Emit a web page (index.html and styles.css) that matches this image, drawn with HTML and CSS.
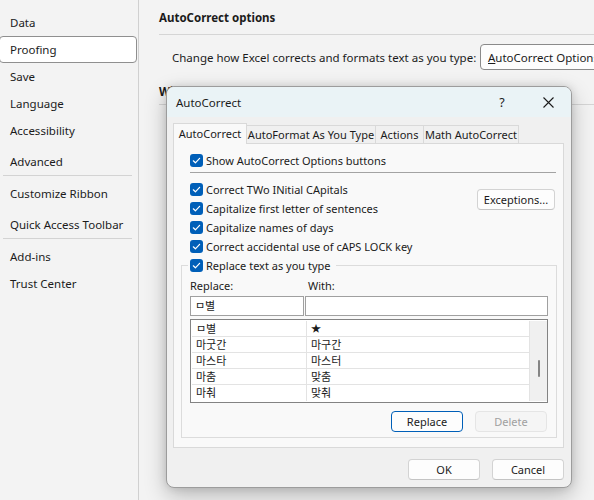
FILE: index.html
```html
<!DOCTYPE html>
<html lang="en">
<head>
<meta charset="utf-8">
<title>Excel Options - Proofing</title>
<link rel="stylesheet" href="styles.css">
</head>
<body>
<div class="app">
  <nav class="sidebar">
    <div class="nav-item">Data</div>
    <div class="nav-item selected">Proofing</div>
    <div class="nav-item">Save</div>
    <div class="nav-item">Language</div>
    <div class="nav-item">Accessibility</div>
    <div class="nav-item spaced">Advanced</div>
    <div class="nav-divider"></div>
    <div class="nav-item spaced">Customize Ribbon</div>
    <div class="nav-item spaced">Quick Access Toolbar</div>
    <div class="nav-divider"></div>
    <div class="nav-item spaced">Add-ins</div>
    <div class="nav-item">Trust Center</div>
  </nav>
  <main class="content">
    <h2 class="section-title">AutoCorrect options</h2>
    <div class="option-row">
      <span class="option-label">Change how Excel corrects and formats text as you type:</span>
      <button class="btn options-btn"><u>A</u>utoCorrect Options...</button>
    </div>
    <h2 class="section-title second">When correcting spelling in Microsoft Office programs</h2>
  </main>

  <div class="dialog">
    <div class="titlebar">
      <span class="dialog-title">AutoCorrect</span>
      <span class="tb-btn help">?</span>
      <span class="tb-btn close">
        <svg width="11" height="11" viewBox="0 0 11 11"><path d="M0.5 0.5 L10.5 10.5 M10.5 0.5 L0.5 10.5" stroke="#1b1b1b" stroke-width="1.1" fill="none"/></svg>
      </span>
    </div>
    <div class="dialog-body">
      <div class="tabs">
        <div class="tab active w1">AutoCorrect</div>
        <div class="tab w2">AutoFormat As You Type</div>
        <div class="tab w3">Actions</div>
        <div class="tab w4">Math AutoCorrect</div>
      </div>
      <div class="panel">
        <div class="check show-row"><span class="box"><svg width="13" height="13" viewBox="0 0 13 13"><path d="M3.3 6.8 L5.4 8.8 L9.6 4.3" stroke="#fff" stroke-width="1.2" fill="none" stroke-linecap="round" stroke-linejoin="round"/></svg></span>Show AutoCorrect Options buttons</div>
        <div class="sep"></div>
        <div class="checks-area">
          <div class="checks">
            <div class="check"><span class="box"><svg width="13" height="13" viewBox="0 0 13 13"><path d="M3.3 6.8 L5.4 8.8 L9.6 4.3" stroke="#fff" stroke-width="1.2" fill="none" stroke-linecap="round" stroke-linejoin="round"/></svg></span>Correct TWo INitial CApitals</div>
            <div class="check"><span class="box"><svg width="13" height="13" viewBox="0 0 13 13"><path d="M3.3 6.8 L5.4 8.8 L9.6 4.3" stroke="#fff" stroke-width="1.2" fill="none" stroke-linecap="round" stroke-linejoin="round"/></svg></span>Capitalize first letter of sentences</div>
            <div class="check"><span class="box"><svg width="13" height="13" viewBox="0 0 13 13"><path d="M3.3 6.8 L5.4 8.8 L9.6 4.3" stroke="#fff" stroke-width="1.2" fill="none" stroke-linecap="round" stroke-linejoin="round"/></svg></span>Capitalize names of days</div>
            <div class="check"><span class="box"><svg width="13" height="13" viewBox="0 0 13 13"><path d="M3.3 6.8 L5.4 8.8 L9.6 4.3" stroke="#fff" stroke-width="1.2" fill="none" stroke-linecap="round" stroke-linejoin="round"/></svg></span>Correct accidental use of cAPS LOCK key</div>
          </div>
          <button class="btn exceptions">Exceptions...</button>
        </div>
        <fieldset class="group">
          <legend class="legend"><span class="check"><span class="box"><svg width="13" height="13" viewBox="0 0 13 13"><path d="M3.3 6.8 L5.4 8.8 L9.6 4.3" stroke="#fff" stroke-width="1.2" fill="none" stroke-linecap="round" stroke-linejoin="round"/></svg></span>Replace text as you type</span></legend>
          <div class="field-labels">
            <span class="lbl-replace">Replace:</span>
            <span class="lbl-with">With:</span>
          </div>
          <div class="inputs">
            <div class="input in-replace">ㅁ별</div>
            <div class="input in-with"></div>
          </div>
          <div class="list">
            <div class="rows">
              <div class="row"><span class="cell c1">ㅁ별</span><span class="cell c2 star">★</span></div>
              <div class="row"><span class="cell c1">마굿간</span><span class="cell c2">마구간</span></div>
              <div class="row"><span class="cell c1">마스타</span><span class="cell c2">마스터</span></div>
              <div class="row"><span class="cell c1">마춤</span><span class="cell c2">맞춤</span></div>
              <div class="row last"><span class="cell c1">마춰</span><span class="cell c2">맞춰</span></div>
            </div>
            <div class="scrollbar"><div class="thumb"></div></div>
          </div>
          <div class="group-buttons">
            <button class="btn dbtn default">Replace</button>
            <button class="btn dbtn disabled">Delete</button>
          </div>
        </fieldset>
      </div>
      <div class="dialog-buttons">
        <button class="btn dbtn">OK</button>
        <button class="btn dbtn">Cancel</button>
      </div>
    </div>
  </div>
</div>
</body>
</html>
```
FILE: styles.css
```css
html, body {
  margin: 0;
  padding: 0;
}
body {
  width: 594px;
  height: 500px;
  overflow: hidden;
  background: #f3f3f3;
  font-family: "Noto Sans", "Noto Sans CJK KR", sans-serif;
  font-size: 11.5px;
  color: #1b1b1b;
}
.app {
  position: relative;
  display: flex;
  width: 594px;
  height: 500px;
  overflow: hidden;
}

/* Sidebar */
.sidebar {
  width: 138px;
  flex-shrink: 0;
  border-right: 1px solid #d0d0d0;
  padding-top: 9px;
}
.nav-item {
  height: 27px;
  line-height: 27px;
  padding-left: 10px;
  white-space: nowrap;
  box-sizing: border-box;
}
.nav-item.selected {
  background: #ffffff;
  border: 1px solid #8f8f8f;
  border-radius: 4px;
  margin-left: -1px;
  margin-right: 1px;
  padding-left: 10px;
  line-height: 25px;
}
.nav-item.spaced {
  margin-top: 4px;
}
.nav-divider {
  height: 1px;
  background: #d3d3d3;
  margin: 0 6px 0 3px;
}

/* Main content */
.content {
  flex: 1;
  min-width: 0;
  padding-left: 20px;
}
.section-title {
  margin: 0;
  font-size: 11.5px;
  font-weight: 700;
  height: 20px;
  line-height: 20px;
  padding: 8px 0 6px 0;
  border-bottom: 1px solid #d5d5d5;
  white-space: nowrap;
}
.section-title.second {
  padding: 12px 0 2px 0;
}
.option-row {
  display: flex;
  align-items: center;
  height: 26px;
  margin-top: 9px;
  padding-left: 13px;
  white-space: nowrap;
}
.option-label {
  width: 308px;
  flex-shrink: 0;
}
.btn {
  font-family: "Noto Sans", "Noto Sans CJK KR", sans-serif;
  font-size: inherit;
  color: #1b1b1b;
  background: #fdfdfd;
  border: 1px solid #d3d3d3;
  border-bottom-color: #c4c4c4;
  border-radius: 4px;
  box-sizing: border-box;
  padding: 0;
  margin: 0;
  white-space: nowrap;
}
.options-btn {
  flex-shrink: 0;
  height: 26px;
  padding: 0 7px;
  border-color: #8a8a8a;
}

/* Dialog */
.dialog {
  position: absolute;
  left: 166px;
  top: 86px;
  width: 406px;
  height: 402px;
  box-sizing: border-box;
  border: 1px solid #9c9c9c;
  border-radius: 8px;
  background: #f0f0f0;
  overflow: hidden;
  font-size: 11px;
  box-shadow: 0 8px 22px rgba(0, 0, 0, 0.24), 0 0 8px rgba(0, 0, 0, 0.12);
}
.titlebar {
  display: flex;
  align-items: center;
  height: 30px;
  background: #eaf3f6;
}
.dialog-title {
  flex: 1;
  padding-left: 9px;
  font-size: 11.5px;
}
.tb-btn {
  width: 46px;
  height: 30px;
  display: flex;
  align-items: center;
  justify-content: center;
}
.help {
  font-size: 12.5px;
}
.dialog-body {
  padding: 6px 7px 0 6px;
}

/* Tabs */
.tabs {
  display: flex;
  align-items: flex-end;
  height: 20px;
}
.tab {
  position: relative;
  height: 18px;
  line-height: 17px;
  box-sizing: border-box;
  border: 1px solid #d9d9d9;
  border-bottom: none;
  background: #f0f0f0;
  text-align: center;
  white-space: nowrap;
  margin-left: -1px;
}
.tab.active {
  height: 21px;
  line-height: 19px;
  margin-bottom: -1px;
  margin-left: 0;
  background: #f9f9f9;
  z-index: 1;
}
.w1 { width: 74px; }
.w2 { width: 130px; }
.w3 { width: 49px; }
.w4 { width: 96px; }

.panel {
  height: 305px;
  box-sizing: border-box;
  border: 1px solid #d9d9d9;
  background: #f9f9f9;
}
.check {
  display: flex;
  align-items: center;
  gap: 3px;
  height: 19px;
  white-space: nowrap;
}
.box {
  width: 13px;
  height: 13px;
  border-radius: 3px;
  background: #005fb8;
  flex-shrink: 0;
  display: flex;
}
.show-row {
  height: 18px;
  margin: 7px 0 0 16px;
}
.sep {
  height: 1px;
  background: #a3a3a3;
  margin: 3px 7px 0 16px;
}
.checks-area {
  display: flex;
  justify-content: space-between;
  align-items: flex-start;
  margin: 7px 8px 0 16px;
}
.exceptions {
  width: 78px;
  height: 21px;
  margin-top: 9px;
}

/* Group box */
.group {
  margin: 0 6px 0 7px;
  padding: 0 8px 5px 8px;
  border: 1px solid #dcdcdc;
  min-width: 0;
}
.legend {
  padding: 0 5px 0 2px;
  margin-left: -2px;
}
.field-labels {
  display: flex;
  height: 20px;
  line-height: 20px;
  margin-top: 1px;
}
.lbl-replace {
  width: 118px;
}
.inputs {
  display: flex;
  gap: 1px;
}
.input {
  height: 20px;
  line-height: 18px;
  box-sizing: border-box;
  border: 1px solid #a0a0a0;
  background: #ffffff;
  padding-left: 4px;
}
.in-replace {
  width: 114px;
}
.in-with {
  width: 243px;
}
.list {
  display: flex;
  margin-top: 3px;
  height: 84px;
  box-sizing: border-box;
  border: 1px solid #838383;
  background: #ffffff;
  padding: 1px 0 1px 1px;
}
.rows {
  flex: 1;
  border-right: 1px solid #e3e3e3;
}
.row {
  display: grid;
  grid-template-columns: 115px 1fr;
  height: 16px;
  box-sizing: border-box;
  border-bottom: 1px solid #e3e3e3;
}
.row.last {
  border-bottom: none;
}
.cell {
  padding-left: 4px;
  line-height: 15px;
  white-space: nowrap;
  overflow: hidden;
}
.c1 {
  border-right: 1px solid #e3e3e3;
}
.star {
  font-size: 10px;
}
.scrollbar {
  width: 17px;
  background: #f0f0f0;
  display: flex;
  flex-direction: column;
  align-items: center;
  padding-top: 39px;
  box-sizing: border-box;
}
.thumb {
  width: 2px;
  height: 17px;
  border-radius: 1px;
  background: #858585;
}
.group-buttons {
  display: flex;
  justify-content: flex-end;
  gap: 12px;
  margin-top: 8px;
  padding-right: 1px;
}
.dbtn {
  width: 72px;
  height: 21px;
}
.dbtn.default {
  border: 1px solid #005fb8;
}
.dbtn.disabled {
  background: #f5f5f5;
  border-color: #e5e5e5;
  color: #a0a0a0;
}
.dialog-buttons {
  display: flex;
  justify-content: flex-end;
  gap: 12px;
  margin-top: 11px;
}
```
